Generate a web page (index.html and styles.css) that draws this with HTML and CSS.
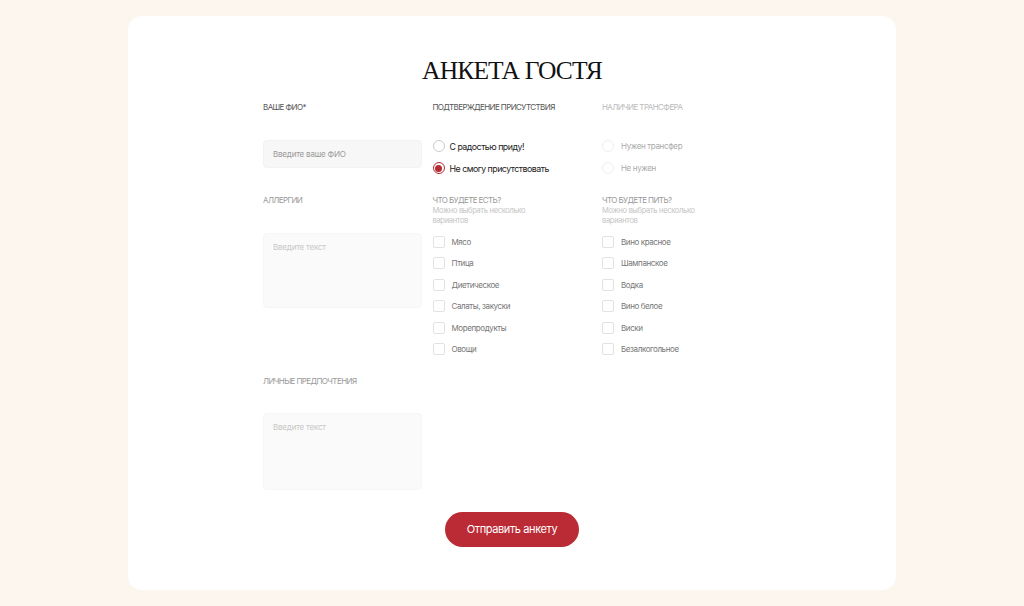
FILE: index.html
```html
<!DOCTYPE html>
<html lang="ru">
<head>
    <meta charset="UTF-8">
    <meta name="viewport" content="width=device-width, initial-scale=1.0">
    <title>Анкета гостя</title>
    <link rel="stylesheet" href="styles.css">
</head>
<body>
    <div class="card">
        <h1>Анкета гостя</h1>
        <form class="form">
            <div class="field">
                <label class="field-title" for="fio">Ваше ФИО*</label>
                <input type="text" id="fio" class="input" placeholder="Введите ваше ФИО">
            </div>
            <div class="field">
                <div class="field-title">Подтверждение присутствия</div>
                <div class="options radios">
                    <label class="option">
                        <input type="radio" name="presence">
                        <span class="mark"></span>
                        <span>С радостью приду!</span>
                    </label>
                    <label class="option">
                        <input type="radio" name="presence" checked>
                        <span class="mark"></span>
                        <span>Не смогу присутствовать</span>
                    </label>
                </div>
            </div>
            <div class="field disabled">
                <div class="field-title">Наличие трансфера</div>
                <div class="options radios">
                    <label class="option">
                        <input type="radio" name="transfer" disabled>
                        <span class="mark"></span>
                        <span>Нужен трансфер</span>
                    </label>
                    <label class="option">
                        <input type="radio" name="transfer" disabled>
                        <span class="mark"></span>
                        <span>Не нужен</span>
                    </label>
                </div>
            </div>

            <div class="field">
                <label class="field-title light" for="allergy">Аллергии</label>
                <textarea id="allergy" class="input area" placeholder="Введите текст"></textarea>
            </div>
            <div class="field">
                <div class="field-title light">Что будете есть?</div>
                <div class="hint">Можно выбрать несколько вариантов</div>
                <div class="options checks">
                    <label class="option"><input type="checkbox"><span class="mark"></span><span>Мясо</span></label>
                    <label class="option"><input type="checkbox"><span class="mark"></span><span>Птица</span></label>
                    <label class="option"><input type="checkbox"><span class="mark"></span><span>Диетическое</span></label>
                    <label class="option"><input type="checkbox"><span class="mark"></span><span>Салаты, закуски</span></label>
                    <label class="option"><input type="checkbox"><span class="mark"></span><span>Морепродукты</span></label>
                    <label class="option"><input type="checkbox"><span class="mark"></span><span>Овощи</span></label>
                </div>
            </div>
            <div class="field">
                <div class="field-title light">Что будете пить?</div>
                <div class="hint">Можно выбрать несколько вариантов</div>
                <div class="options checks">
                    <label class="option"><input type="checkbox"><span class="mark"></span><span>Вино красное</span></label>
                    <label class="option"><input type="checkbox"><span class="mark"></span><span>Шампанское</span></label>
                    <label class="option"><input type="checkbox"><span class="mark"></span><span>Водка</span></label>
                    <label class="option"><input type="checkbox"><span class="mark"></span><span>Вино белое</span></label>
                    <label class="option"><input type="checkbox"><span class="mark"></span><span>Виски</span></label>
                    <label class="option"><input type="checkbox"><span class="mark"></span><span>Безалкогольное</span></label>
                </div>
            </div>

            <div class="field">
                <label class="field-title light" for="prefs">Личные предпочтения</label>
                <textarea id="prefs" class="input area tall" placeholder="Введите текст"></textarea>
            </div>

            <div class="actions">
                <button type="submit" class="submit">Отправить анкету</button>
            </div>
        </form>
    </div>
</body>
</html>
```

FILE: styles.css
```css
body {
    margin: 0;
    background-color: #fdf6ef;
    font-family: 'Inter', 'Roboto', sans-serif;
    color: #222;
}
.card {
    width: 768px;
    height: 574px;
    box-sizing: border-box;
    margin: 16px auto 0;
    padding: 40px 0 0;
    background-color: #fff;
    border-radius: 14px;
}
h1 {
    margin: 0 0 15px;
    font-family: 'Liberation Serif', serif;
    font-weight: normal;
    font-size: 25.5px;
    line-height: 30px;
    letter-spacing: -0.85px;
    text-align: center;
    text-transform: uppercase;
    color: #111;
}
.form {
    display: grid;
    grid-template-columns: repeat(3, 159px);
    column-gap: 10.5px;
    row-gap: 20px;
    width: 498px;
    margin: 0 auto;
    align-items: start;
}
.field {
    display: flex;
    flex-direction: column;
}
.field-title {
    display: block;
    font-size: 8px;
    line-height: 12px;
    letter-spacing: -0.6px;
    text-transform: uppercase;
    color: #555;
    margin-bottom: 27px;
}
.field-title.light {
    color: #999;
    margin-bottom: 0;
}
.field-title.light + .input {
    margin-top: 27px;
}
.disabled .field-title {
    color: #bbb;
}
.hint {
    width: 100px;
    font-size: 7.5px;
    line-height: 9.5px;
    letter-spacing: -0.3px;
    color: #c4c4c4;
    margin-bottom: 11px;
}
.input {
    box-sizing: border-box;
    width: 159px;
    height: 28px;
    padding: 0 9px;
    border: 1px solid #f2f2f2;
    border-radius: 4px;
    background-color: #f7f7f7;
    font-family: inherit;
    font-size: 8px;
    letter-spacing: -0.2px;
    color: #333;
    outline: none;
}
.input::placeholder {
    color: #999;
}
.area {
    height: 75px;
    padding: 8px 9px;
    resize: none;
    background-color: #fafafa;
    border-color: #f6f6f6;
}
.area::placeholder {
    color: #c8c8c8;
}
.area.tall {
    height: 77px;
    margin-top: 26px !important;
}
.options {
    display: flex;
    flex-direction: column;
}
.radios {
    gap: 10px;
}
.checks {
    gap: 9.4px;
}
.option {
    display: flex;
    align-items: center;
    gap: 5px;
    height: 12px;
    font-size: 8px;
    letter-spacing: -0.4px;
    color: #777;
    cursor: pointer;
}
.radios .option {
    font-size: 8.8px;
    letter-spacing: -0.5px;
    color: #222;
}
.disabled .radios .option {
    font-size: 8px;
    letter-spacing: -0.35px;
    color: #aaa;
    cursor: default;
}
.option input {
    display: none;
}
.mark {
    box-sizing: border-box;
    width: 12px;
    height: 12px;
    flex-shrink: 0;
    border: 1px solid #e2e2e2;
    background-color: #fff;
}
.checks .mark {
    border-radius: 2px;
    margin-right: 2px;
}
.radios .mark {
    border-radius: 50%;
    border-color: #ccc;
    position: relative;
}
.disabled .radios .mark {
    border-color: #eee;
    margin-right: 2px;
}
.radios input:checked + .mark {
    border-color: #b52a33;
}
.radios input:checked + .mark::after {
    content: "";
    position: absolute;
    top: 1.5px;
    left: 1.5px;
    width: 7px;
    height: 7px;
    border-radius: 50%;
    background-color: #b52a33;
}
.actions {
    grid-column: 1 / -1;
    display: flex;
    justify-content: center;
    margin-top: 2px;
}
.submit {
    width: 134px;
    height: 35px;
    border: none;
    border-radius: 18px;
    background-color: #bb2b35;
    color: #fff;
    font-family: inherit;
    font-size: 11px;
    letter-spacing: -0.4px;
    cursor: pointer;
}
```
